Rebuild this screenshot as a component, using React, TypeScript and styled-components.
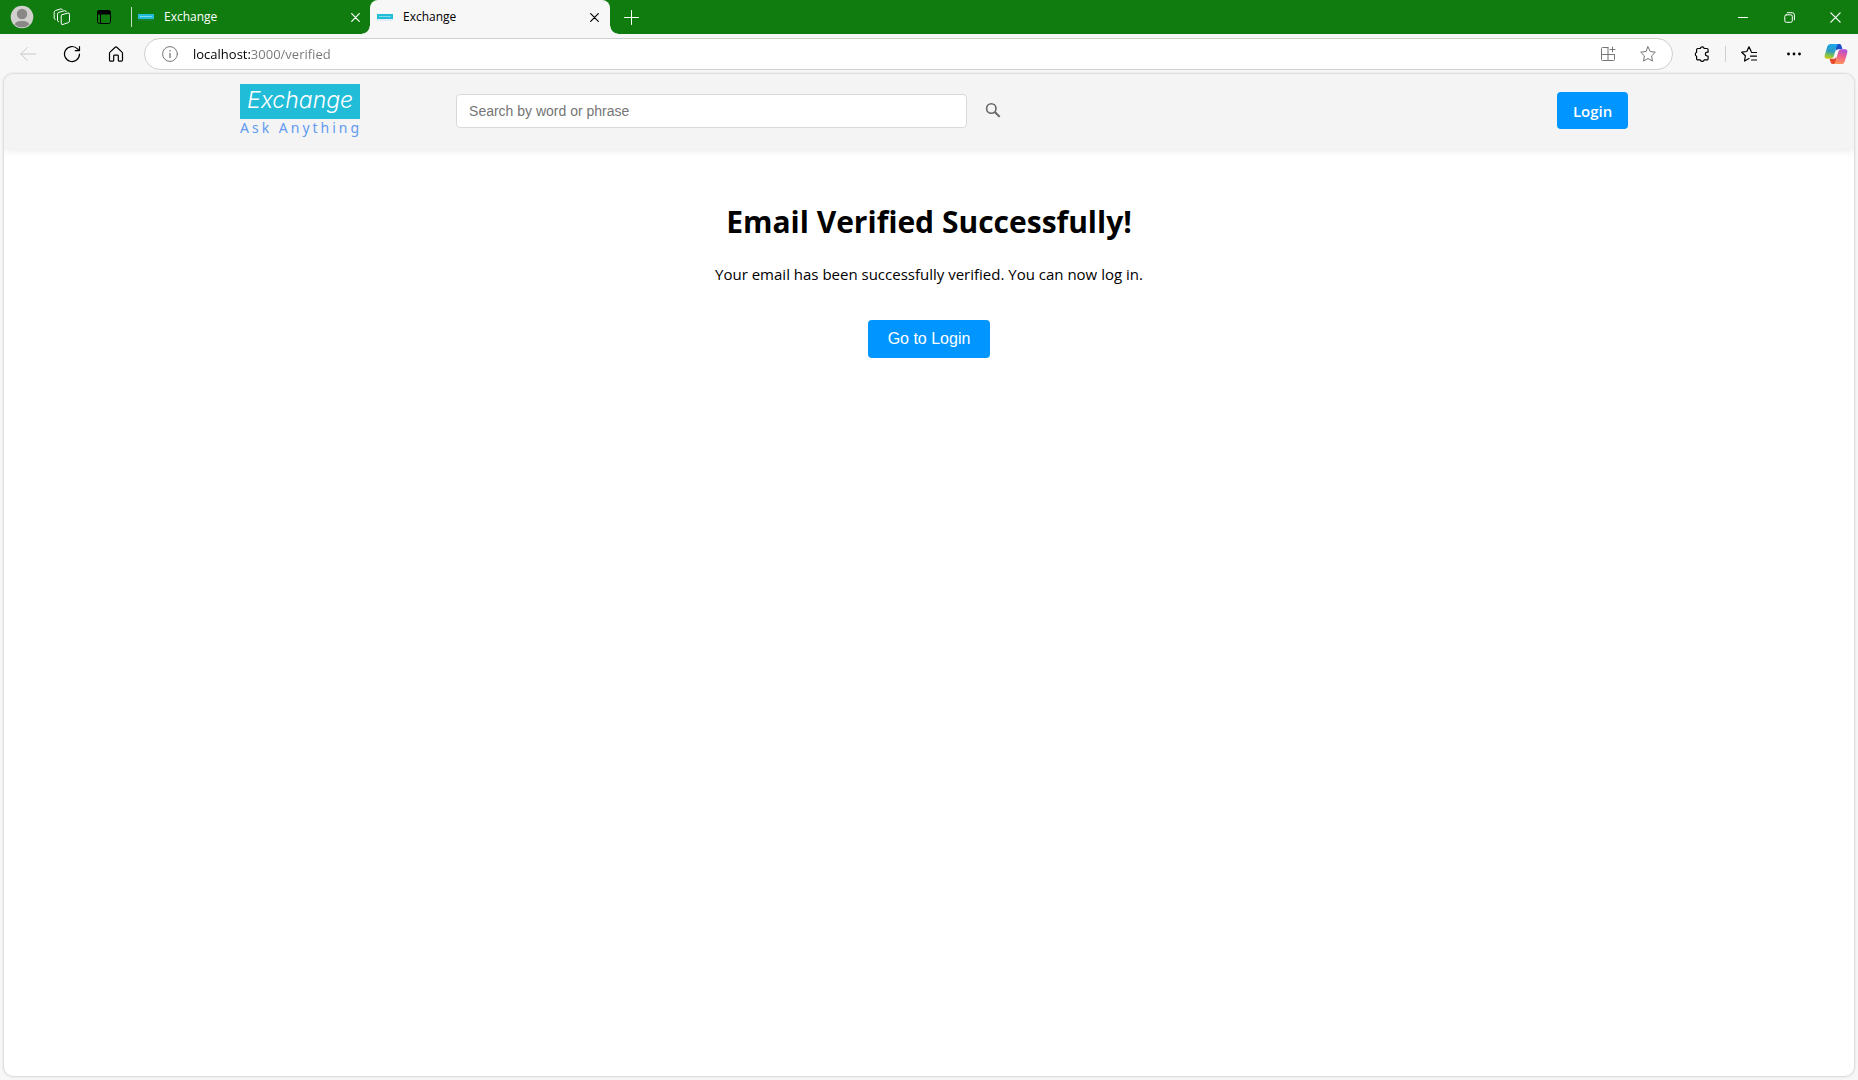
import React from "react";
import styled, { createGlobalStyle } from "styled-components";

const ui = `"Segoe UI", "Open Sans", "Noto Sans", sans-serif`;
const arial = `Arial, "Liberation Sans", sans-serif`;

const GlobalStyle = createGlobalStyle`
  *, *::before, *::after { box-sizing: border-box; }
  body { margin: 0; background: #f7f7f7; color: #000; font-family: ${ui}; }
  button, input { margin: 0; font: inherit; }
`;

const Browser = styled.div`
  display: flex;
  flex-direction: column;
  min-height: 100vh;
`;

const TitleBar = styled.div`
  display: flex;
  align-items: stretch;
  height: 34px;
  background: #107c10;
  color: #fff;
`;

const IconButton = styled.button<{ $w: number; $color?: string }>`
  display: inline-flex;
  align-items: center;
  justify-content: center;
  flex: none;
  width: ${(p) => p.$w}px;
  padding: 0;
  border: 0;
  background: none;
  color: ${(p) => p.$color ?? "inherit"};
  cursor: pointer;
`;

const Divider = styled.span<{ $color: string; $h: number; $gap: number }>`
  flex: none;
  align-self: center;
  width: 1px;
  height: ${(p) => p.$h}px;
  margin-left: ${(p) => p.$gap}px;
  background: ${(p) => p.$color};
`;

const Tabs = styled.div`
  display: flex;
  flex: 1;
  min-width: 0;
`;

const Tab = styled.div<{ $active?: boolean }>`
  position: relative;
  display: flex;
  align-items: stretch;
  width: ${(p) => (p.$active ? 240 : 238)}px;
  padding: 0 5px 0 ${(p) => (p.$active ? 7 : 6)}px;
  border-radius: 8px 8px 0 0;
  background: ${(p) => (p.$active ? "#f7f7f7" : "transparent")};
  color: ${(p) => (p.$active ? "#000" : "#fff")};

  &::before, &::after {
    content: "";
    display: ${(p) => (p.$active ? "block" : "none")};
    position: absolute;
    bottom: 0;
    width: 8px;
    height: 8px;
  }
  &::before {
    right: 100%;
    background: radial-gradient(circle at 0 0, transparent 7px, #f7f7f7 8px);
  }
  &::after {
    left: 100%;
    background: radial-gradient(circle at 100% 0, transparent 7px, #f7f7f7 8px);
  }
`;

const TabLabel = styled.button`
  display: flex;
  align-items: center;
  flex: 1;
  gap: 10px;
  padding: 0;
  border: 0;
  background: none;
  color: inherit;
  font-size: 12px;
  line-height: 16px;
`;

const Toolbar = styled.div`
  display: flex;
  align-items: center;
  height: 40px;
  padding: 0 2px 0 6px;
`;

const AddressBar = styled.label`
  display: flex;
  align-items: center;
  flex: 1;
  min-width: 0;
  height: 32px;
  margin: 0 8px 0 6px;
  padding: 0 4px 0 17px;
  border: 1px solid #cfcfcf;
  border-radius: 16px;
  background: #fff;
  color: #767676;
`;

const AddressInput = styled.input`
  flex: 1;
  min-width: 0;
  margin-left: 15px;
  padding: 0;
  border: 0;
  outline: 0;
  background: linear-gradient(90deg, #000 57px, #767676 57px);
  background-clip: text;
  -webkit-background-clip: text;
  color: #767676;
  -webkit-text-fill-color: transparent;
  font-size: 13px;
  line-height: 20px;
`;

const Page = styled.div`
  display: flex;
  flex-direction: column;
  flex: 1;
  margin: 0 4px 4px;
  border-radius: 9px;
  background: #fff;
  box-shadow: 0 0 3px rgba(0, 0, 0, 0.28);
  overflow: hidden;
`;

const Header = styled.header`
  display: flex;
  align-items: center;
  height: 75px;
  padding: 0 12.2% 2px 12.76%;
  background: #f4f4f4;
  box-shadow: 0 2px 8px rgba(0, 0, 0, 0.08);
`;

const Logo = styled.a`
  display: flex;
  flex-direction: column;
  flex: none;
  width: 122px;
  margin-right: 94px;
  text-decoration: none;
`;

const LogoName = styled.span`
  width: 120px;
  height: 35px;
  background: #20bcd8;
  color: #fff;
  font: italic 300 23px/32px Inter, sans-serif;
  text-align: center;
`;

const LogoTagline = styled.span`
  color: #619af0;
  font: 14px/18px "Noto Sans", sans-serif;
  letter-spacing: 3px;
  white-space: nowrap;
`;

const SearchForm = styled.form`
  display: flex;
  align-items: center;
  flex: 0 1 563px;
  min-width: 0;
`;

const SearchInput = styled.input`
  flex: 1;
  min-width: 0;
  height: 34px;
  padding: 0 12px;
  border: 1px solid #d9d9d9;
  border-radius: 4px;
  background: #fff;
  color: #333;
  font: 14px/18px ${arial};
  &::placeholder { color: #757575; opacity: 1; }
`;

const LoginLink = styled.a`
  flex: none;
  margin-left: auto;
  padding: 9px 16px 7px;
  border-radius: 4px;
  background: #0095ff;
  color: #fff;
  font-size: 15px;
  font-weight: 600;
  line-height: 21px;
  text-decoration: none;
`;

const Main = styled.main`
  display: flex;
  flex-direction: column;
  align-items: center;
  padding: 50px 20px;
  text-align: center;
`;

const Title = styled.h1`
  margin: 0 0 20px;
  font-size: 30px;
  font-weight: 700;
  line-height: 46px;
`;

const Message = styled.p`
  margin: 0 0 36px;
  font-size: 15px;
  line-height: 19px;
`;

const PrimaryButton = styled.button`
  padding: 10px 20px;
  border: 0;
  border-radius: 4px;
  background: #0095ff;
  color: #fff;
  font: 16px/18px ${arial};
  cursor: pointer;
`;

type IconProps = { size?: number; w?: number; children: React.ReactNode; box?: number };
const Icon = ({ size = 16, w = 1, box, children }: IconProps) => (
  <svg width={size} height={size} viewBox={`0 0 ${box ?? size} ${box ?? size}`} fill="none" stroke="currentColor"
    strokeWidth={w} strokeLinecap="round" strokeLinejoin="round" aria-hidden="true">{children}</svg>
);

const Favicon = () => (
  <svg width="16" height="8" viewBox="0 0 16 8" aria-hidden="true">
    <rect y="1" width="16" height="5" fill="#20bcd8" />
    <path d="M2 3.5h12" stroke="#a5e5f0" strokeDasharray="1.3 .4" />
    <path d="M0 7h16" stroke="#619af0" strokeOpacity=".4" strokeDasharray="1 .6" />
  </svg>
);

const Cross = ({ size = 9, w = 1.2 }) => (
  <Icon size={size} w={w} box={9}><path d="M.7.7l7.6 7.6M8.3.7L.7 8.3" /></Icon>
);

const Avatar = () => (
  <svg width="24" height="24" viewBox="0 0 24 24" aria-hidden="true">
    <circle cx="12" cy="12" r="11.3" fill="#d2d0ce" />
    <circle cx="12" cy="9" r="5.2" fill="#8a8886" />
    <path d="M4.6 19.5C6 16.3 9 16 12 16s6 .3 7.4 3.5A11 11 0 0 1 12 22.3a11 11 0 0 1-7.4-2.8z" fill="#8a8886" />
  </svg>
);

const Copilot = () => (
  <svg width="24" height="22" viewBox="0 0 24 22" aria-hidden="true">
    <defs>
      <linearGradient id="cpA" x1="8" y1="1" x2="5" y2="17" gradientUnits="userSpaceOnUse">
        <stop offset="0" stopColor="#1ba7f0" /><stop offset=".45" stopColor="#2e9cc0" />
        <stop offset=".75" stopColor="#8cc63f" /><stop offset="1" stopColor="#f4c20d" />
      </linearGradient>
      <linearGradient id="cpB" x1="19" y1="5" x2="14" y2="21" gradientUnits="userSpaceOnUse">
        <stop offset="0" stopColor="#a34ee8" /><stop offset=".5" stopColor="#ee5f8f" /><stop offset="1" stopColor="#ff9a55" />
      </linearGradient>
    </defs>
    <path d="M12 1h3.5c1.2 0 1.6.8 2 2l1 3.3h-4c-1.5 0-2.3.8-2.8 2.3z" fill="#1d50c8" />
    <path d="M12 21H8.7c-1.3 0-1.8-.7-2.2-2l-1-3.3h4c1.5 0 2.2-.8 2.7-2.3z" fill="#e8472f" />
    <path d="M6.7 1h8c-1.1.3-1.7 1.3-2.1 2.6L9.8 13c-.5 1.7-1.5 2.8-3.3 2.8H3C.7 15.8.2 14 .8 12l2.5-8.4C3.9 1.9 5 1 6.7 1z" fill="url(#cpA)" />
    <path d="M17.3 21h-8c1.1-.3 1.7-1.3 2.1-2.6L14.2 9c.5-1.7 1.5-2.8 3.3-2.8H21c2.3 0 2.8 1.8 2.2 3.8l-2.5 8.4c-.6 1.7-1.7 2.6-3.4 2.6z" fill="url(#cpB)" />
  </svg>
);

const starPath = "M8 .8l2.2 4.7 5.1.7-3.7 3.6.9 5.2L8 12.5 3.5 15l.9-5.2L.7 6.2l5.1-.7z";

export default function App() {
  return (
    <>
      <GlobalStyle />
      <Browser>
        <TitleBar>
          <IconButton $w={44} aria-label="Profile"><Avatar /></IconButton>
          <IconButton $w={36} aria-label="Workspaces">
            <Icon size={18}>
              <path d="M9.2 6.6l5.6-1.5a1.3 1.3 0 0 1 1.7 1.3v6.4a2 2 0 0 1-1.4 1.9l-5 1.7a1.4 1.4 0 0 1-1.9-1.3V8a1.5 1.5 0 0 1 1-1.4z" />
              <path d="M5.5 13.7a1.3 1.3 0 0 1-1-1.3V6.2a2 2 0 0 1 1.4-1.9l5.6-1.6a1.4 1.4 0 0 1 1.7 1M2.2 11.5a1.3 1.3 0 0 1-1-1.3V4.4a2 2 0 0 1 1.4-1.9L7.8.9a1.4 1.4 0 0 1 1.6.7" />
            </Icon>
          </IconButton>
          <IconButton $w={48} $color="#000" aria-label="Tab actions">
            <Icon size={16}><rect x="1.5" y="1.5" width="13" height="13" rx="2" /><path d="M2 2h12v3H2z" fill="currentColor" /><path d="M4.5 5v9" /></Icon>
          </IconButton>
          <Divider $color="#c3dfc3" $h={20} $gap={3} />
          <Tabs role="tablist">
            <Tab>
              <TabLabel role="tab" aria-selected={false}><Favicon />Exchange</TabLabel>
              <IconButton $w={20} aria-label="Close tab"><Cross /></IconButton>
            </Tab>
            <Tab $active>
              <TabLabel role="tab" aria-selected><Favicon />Exchange</TabLabel>
              <IconButton $w={22} aria-label="Close tab"><Cross /></IconButton>
            </Tab>
            <IconButton $w={43} aria-label="New tab"><Icon size={15}><path d="M7.5.5v14M.5 7.5h14" /></Icon></IconButton>
          </Tabs>
          <IconButton $w={46} aria-label="Minimize"><Icon size={10}><path d="M.5 5.5h9" /></Icon></IconButton>
          <IconButton $w={46} aria-label="Restore">
            <Icon size={11}><rect x=".8" y="2.8" width="7.5" height="7.5" rx="1.5" /><path d="M3.3.7h4.9a2.2 2.2 0 0 1 2.2 2.2v4.9" /></Icon>
          </IconButton>
          <IconButton $w={46} aria-label="Close window"><Cross size={11} w={1} /></IconButton>
        </TitleBar>

        <Toolbar>
          <IconButton $w={44} $color="#c8c8c8" aria-label="Back"><Icon size={16}><path d="M15.5 8H.8M7.3 1.5L.8 8l6.500 6.500" /></Icon></IconButton>
          <IconButton $w={44} aria-label="Refresh">
            <Icon size={18} w={1.2}><path d="M16.500 9a7.500 7.500 0 1 1-2-5.100l1.500 1.600M16.500 1.500v4.200h-4.200" /></Icon>
          </IconButton>
          <IconButton $w={44} aria-label="Home">
            <Icon size={16} w={1.2}><path d="M1.5 7.2a1.5 1.5 0 0 1 .5-1.1L7.2 1.2a1.2 1.2 0 0 1 1.6 0L14 6.1a1.5 1.5 0 0 1 .5 1.1v6.8a1.2 1.2 0 0 1-1.2 1.2h-2a1 1 0 0 1-1-1V10a.8.8 0 0 0-.8-.8h-3a.8.8 0 0 0-.8.8v4.2a1 1 0 0 1-1 1h-2A1.2 1.2 0 0 1 1.5 14z" /></Icon>
          </IconButton>
          <AddressBar>
            <Icon size={16}><circle cx="8" cy="8" r="7.4" /><path d="M8 7.5v4M8 4.7v.3" strokeWidth="1.3" /></Icon>
            <AddressInput aria-label="Address" defaultValue="localhost:3000/verified" />
            <IconButton $w={40} type="button" aria-label="Install app">
              <Icon size={16}><path d="M8 1.500H2.500a1 1 0 0 0-1 1v11a1 1 0 0 0 1 1h11a1 1 0 0 0 1-1V8.500M8 1.500v13M1.500 8.500h13M12.500 1v5M10 3.500h5" /></Icon>
            </IconButton>
            <IconButton $w={40} type="button" aria-label="Add to favorites"><Icon size={16}><path d={starPath} /></Icon></IconButton>
          </AddressBar>
          <IconButton $w={42} aria-label="Extensions">
            <Icon size={16} w={1.2}><path d="M6.300 2.500a2 2 0 0 1 3.900 0h2.700a1.200 1.200 0 0 1 1.200 1.200v2.500h-.8a1.900 1.900 0 0 0 0 3.800h.8v2.700a1.200 1.200 0 0 1-1.200 1.200h-2.700a2 2 0 0 1-3.900 0H3.800a1.200 1.200 0 0 1-1.200-1.200V10.200a2.200 2.200 0 0 1 0-4V3.700a1.200 1.200 0 0 1 1.200-1.200z" /></Icon>
          </IconButton>
          <Divider $color="#d0d0d0" $h={16} $gap={2} />
          <IconButton $w={46} aria-label="Favorites">
            <Icon size={16} w={1.2}><path d="M8 12.500L3.500 15l.9-5.200L.7 6.200l5.100-.7L8 .8l2.200 4.700M10.500 6.500h5M9.500 10.200h6M10.500 14h5" /></Icon>
          </IconButton>
          <IconButton $w={44} aria-label="Settings and more">
            <Icon size={16}><g fill="currentColor" stroke="none"><circle cx="2.5" cy="8" r="1.400" /><circle cx="8" cy="8" r="1.400" /><circle cx="13.500" cy="8" r="1.400" /></g></Icon>
          </IconButton>
          <IconButton $w={40} aria-label="Copilot"><Copilot /></IconButton>
        </Toolbar>

        <Page>
          <Header>
            <Logo href="#">
              <LogoName>Exchange</LogoName>
              <LogoTagline>Ask Anything</LogoTagline>
            </Logo>
            <SearchForm role="search" onSubmit={(e) => e.preventDefault()}>
              <SearchInput type="text" aria-label="Search" placeholder="Search by word or phrase" />
              <IconButton $w={52} $color="#666" aria-label="Submit search">
                <Icon size={16} w={1.6}><circle cx="6.300" cy="5.500" r="4.700" /><path d="M9.800 9l4.900 4.900" strokeWidth="2" strokeLinecap="butt" /></Icon>
              </IconButton>
            </SearchForm>
            <LoginLink href="#">Login</LoginLink>
          </Header>
          <Main>
            <Title>Email Verified Successfully!</Title>
            <Message>Your email has been successfully verified. You can now log in.</Message>
            <PrimaryButton type="button">Go to Login</PrimaryButton>
          </Main>
        </Page>
      </Browser>
    </>
  );
}
